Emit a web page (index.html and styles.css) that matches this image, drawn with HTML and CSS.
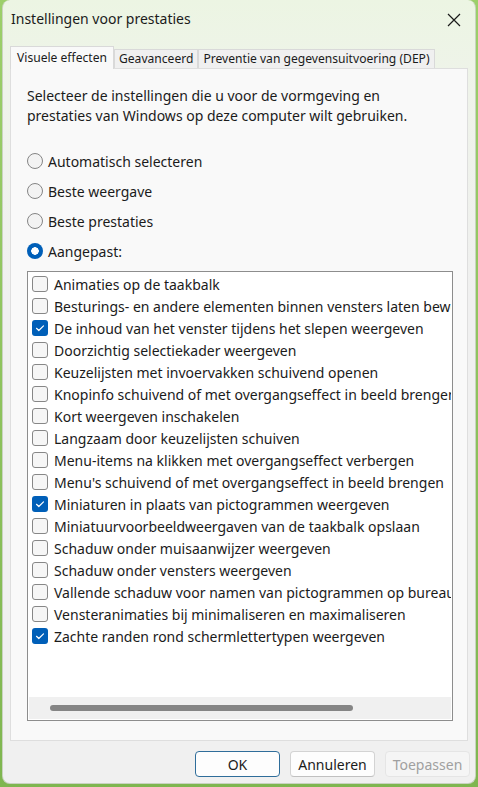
FILE: index.html
```html
<!DOCTYPE html>
<html lang="nl">
<head>
<meta charset="utf-8">
<title>Instellingen voor prestaties</title>
<link rel="stylesheet" href="styles.css">
</head>
<body>
<div class="window">
  <div class="titlebar">
    <span class="title">Instellingen voor prestaties</span>
    <svg class="close" width="14" height="14" viewBox="0 0 14 14"><path d="M1 1 L13 13 M13 1 L1 13" stroke="#1a1a1a" stroke-width="1.2" fill="none"/></svg>
  </div>
  <div class="tabs">
    <div class="tab active">Visuele effecten</div>
    <div class="tab">Geavanceerd</div>
    <div class="tab">Preventie van gegevensuitvoering (DEP)</div>
  </div>
  <div class="panel">
    <p class="desc">Selecteer de instellingen die u voor de vormgeving en prestaties van Windows op deze computer wilt gebruiken.</p>
    <div class="radios">
      <div class="radio"><span class="dot"></span>Automatisch selecteren</div>
      <div class="radio"><span class="dot"></span>Beste weergave</div>
      <div class="radio"><span class="dot"></span>Beste prestaties</div>
      <div class="radio"><span class="dot on"></span>Aangepast:</div>
    </div>
    <div class="listbox">
      <div class="items">
        <div class="item"><span class="box"></span>Animaties op de taakbalk</div>
        <div class="item"><span class="box"></span>Besturings- en andere elementen binnen vensters laten bewegen</div>
        <div class="item"><span class="box on"></span>De inhoud van het venster tijdens het slepen weergeven</div>
        <div class="item"><span class="box"></span>Doorzichtig selectiekader weergeven</div>
        <div class="item"><span class="box"></span>Keuzelijsten met invoervakken schuivend openen</div>
        <div class="item"><span class="box"></span>Knopinfo schuivend of met overgangseffect in beeld brengen</div>
        <div class="item"><span class="box"></span>Kort weergeven inschakelen</div>
        <div class="item"><span class="box"></span>Langzaam door keuzelijsten schuiven</div>
        <div class="item"><span class="box"></span>Menu-items na klikken met overgangseffect verbergen</div>
        <div class="item"><span class="box"></span>Menu's schuivend of met overgangseffect in beeld brengen</div>
        <div class="item"><span class="box on"></span>Miniaturen in plaats van pictogrammen weergeven</div>
        <div class="item"><span class="box"></span>Miniatuurvoorbeeldweergaven van de taakbalk opslaan</div>
        <div class="item"><span class="box"></span>Schaduw onder muisaanwijzer weergeven</div>
        <div class="item"><span class="box"></span>Schaduw onder vensters weergeven</div>
        <div class="item"><span class="box"></span>Vallende schaduw voor namen van pictogrammen op bureaublad</div>
        <div class="item"><span class="box"></span>Vensteranimaties bij minimaliseren en maximaliseren</div>
        <div class="item"><span class="box on"></span>Zachte randen rond schermlettertypen weergeven</div>
      </div>
      <div class="hscroll"><div class="thumb"></div></div>
    </div>
  </div>
  <div class="buttons">
    <button class="btn default">OK</button>
    <button class="btn">Annuleren</button>
    <button class="btn disabled">Toepassen</button>
  </div>
</div>
</body>
</html>
```
FILE: styles.css
```css
* { box-sizing: border-box; }
html, body { margin: 0; padding: 0; }
body {
  width: 478px;
  height: 787px;
  overflow: hidden;
  background: linear-gradient(180deg, #9ccf6a 0%, #7fb650 100%);
  font-family: "Noto Sans", "Liberation Sans", sans-serif;
  color: #1b1b1b;
}
.window {
  margin: 0 2px 0 2px;
  height: 784px;
  border-radius: 8px;
  background: linear-gradient(180deg, #ecf5e3 0px, #eff3ea 90px, #f0f0f0 300px, #f0f0f0 100%);
  border: 1px solid #c9d3c0;
  border-top: none;
  display: flex;
  flex-direction: column;
  overflow: hidden;
}
.titlebar {
  height: 46px;
  display: flex;
  align-items: flex-start;
  justify-content: space-between;
  padding: 9px 14px 0 8px;
}
.title { font-size: 14px; line-height: 20px; }
.close { margin-top: 4px; }
.tabs {
  display: flex;
  align-items: flex-end;
  padding-left: 7px;
  height: 22px;
  position: relative;
  z-index: 1;
}
.tab {
  font-size: 12.1px;
  height: 19px;
  line-height: 17px;
  padding: 0 4px;
  border: 1px solid #d9d9d9;
  border-bottom: none;
  background: #f0f0f0;
  white-space: nowrap;
}
.tab.active {
  height: 23px;
  margin-bottom: -1px;
  background: #f9f9f9;
  padding: 2px 6px 0 6px;
  border-color: #d9d9d9;
}
.panel {
  margin: 0 7px 0 7px;
  background: #f9f9f9;
  border: 1px solid #dedede;
  padding: 17px 14px 19px 16px;
}
.desc {
  margin: 0;
  font-size: 14px;
  line-height: 20px;
  padding-right: 30px;
}
.radios { margin-top: 20px; display: flex; flex-direction: column; }
.radio {
  height: 30px;
  display: flex;
  align-items: center;
  font-size: 14px;
}
.dot {
  width: 16px;
  height: 16px;
  border-radius: 50%;
  border: 1px solid #858585;
  background: #f3f3f3;
  margin-right: 5px;
  flex: none;
}
.dot.on {
  border: none;
  background: radial-gradient(circle, #ffffff 0 3.5px, #005fb8 4px);
}
.listbox {
  margin-top: 5px;
  height: 450px;
  border: 1px solid #8d8d8d;
  background: #ffffff;
  display: flex;
  flex-direction: column;
  padding: 1px;
}
.items { flex: 1; overflow: hidden; }
.item {
  height: 22px;
  display: flex;
  align-items: center;
  padding-left: 3px;
  font-size: 14px;
  white-space: nowrap;
}
.box {
  width: 16px;
  height: 16px;
  border: 1px solid #878787;
  border-radius: 3px;
  background: #f6f6f6;
  margin-right: 6px;
  flex: none;
}
.box.on {
  border: none;
  background: #005fb8 url("data:image/svg+xml;utf8,<svg xmlns='http://www.w3.org/2000/svg' width='16' height='16'><path d='M4.5 8.3 L6.8 10.5 L11.5 5.8' stroke='white' stroke-width='1.2' fill='none' stroke-linecap='round' stroke-linejoin='round'/></svg>") center no-repeat;
}
.hscroll {
  height: 22px;
  background: #f0f0f0;
  flex: none;
  display: flex;
  align-items: center;
  padding-left: 21px;
}
.thumb {
  width: 303px;
  height: 6px;
  border-radius: 3px;
  background: #858585;
}
.buttons {
  display: flex;
  justify-content: flex-end;
  gap: 10px;
  padding: 10px 5px 0 0;
}
.btn {
  width: 85px;
  height: 26px;
  font-family: inherit;
  font-size: 14px;
  color: #1b1b1b;
  background: #fdfdfd;
  border: 1px solid #d3d3d3;
  border-bottom-color: #c0c0c0;
  border-radius: 4px;
  padding: 0;
}
.btn.default { border-color: #2f6d9a; }
.btn.disabled { color: #a0a0a0; background: #f5f5f5; border-color: #e5e5e5; }
```
